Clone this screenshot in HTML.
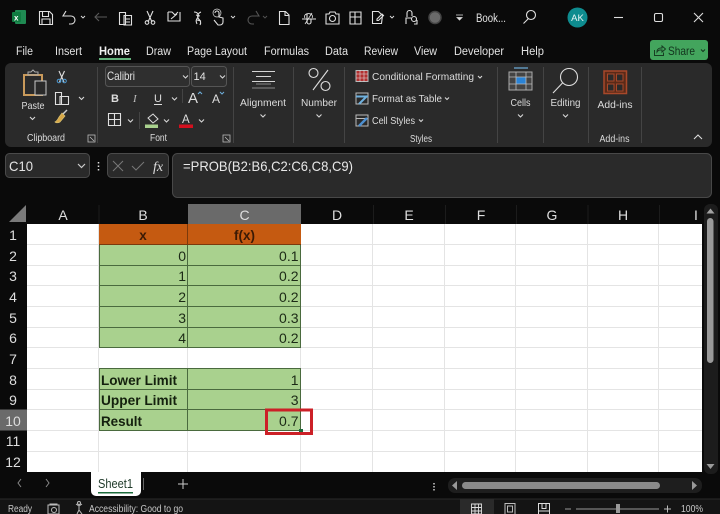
<!DOCTYPE html>
<html><head><meta charset="utf-8"><style>
html,body{margin:0;padding:0;background:#0a0a0a;width:720px;height:514px;overflow:hidden}
svg{display:block}
text{font-family:"Liberation Sans",sans-serif}
.t{font-size:11.500px;fill:#e2e2e2}
.s{font-size:10.500px;fill:#dcdcdc}
.h{font-size:14px;fill:#dedede;text-anchor:middle}
.c{font-size:14px;fill:#1c2a16;text-anchor:end}
.b{font-size:14px;font-weight:bold;fill:#14200e}
.i{fill:none;stroke:#e0e0e0;stroke-width:1.1}
.d{fill:none;stroke:#d8d8d8;stroke-width:1.1}
</style></head><body>
<svg width="720" height="514" viewBox="0 0 720 514" xmlns="http://www.w3.org/2000/svg">
<rect width="720" height="514" fill="#0a0a0a"/>

<!-- Title bar -->
<rect x="15" y="10" width="11" height="14" rx="1" fill="#1f8a52"/>
<rect x="12" y="12" width="9" height="10" rx="1" fill="#107c41"/>
<text x="14" y="20.500" style="font-size:8px;font-weight:bold;fill:#fff">x</text>
<g class="i">
<path d="M39.500 11.500h10l3 3v10h-13z M42.500 11.500v5h6v-5 M42 24v-5h8v5"/>
<path d="M66 11l-3 5h6 M64 16h7a4 4 0 0 1 0 8h-2"/>
<path d="M81 16l2 2 2-2" stroke-width=".9"/>
<path d="M95 17h12 M99 13l-4 4 4 4" stroke="#5a5a5a"/>
<path d="M119.500 12.500h6v12h-6z M124 15.500h7.500v9.500h-7.500z M126 19h4M126 22h4"/>
<path d="M147 11l5 11 M153 11l-5 11"/><circle cx="147" cy="22.500" r="1.800"/><circle cx="153" cy="22.500" r="1.800"/>
<path d="M168 12v9h12v-9 M168 12h4l3 3 3-3 M171 19l6-5"/>
<path d="M194 12c4 0 5 3 4 5s-3 3-1 7 M201 12c-3 1-4 4-3 6s4 3 2 7 M196 15l4 1 M197 20l4 1"/>
<path d="M215 13a2 2 0 0 1 4 0v4l4 1v4a3 3 0 0 1-3 3h-2l-4-5"/><circle cx="217" cy="13" r="4" stroke-width=".7"/>
<path d="M231 16l2 2 2-2" stroke-width=".9"/>
<path d="M256 11l3 5h-6 M258 16h-6a4 4 0 0 0 0 8h2" stroke="#555"/>
<path d="M263 16l2 2 2-2" stroke="#555" stroke-width=".9"/>
<path d="M279.500 11.500h6l3.500 3.500v9.500h-9.500z M285 11.500v4h4"/>
<path d="M302 19h14 M307 14v8a2 2 0 0 0 4 0v-3"/><path d="M305 18a4 3 0 1 1 7 0" stroke-width=".8"/><path d="M312 13l-7 11" stroke-width=".8"/>
<path d="M326 14h3l1-2h5l1 2h3v10h-13z"/><circle cx="332.500" cy="18.500" r="3"/>
<path d="M350 12h11v12h-11z M355 12v12 M350 17h11"/>
<path d="M372.500 11.500h6l4 4-1 8h-9z M377 19l5-5 1.500 1.500-5 5h-1.500z"/>
<path d="M390 16l2 2 2-2" stroke-width=".9"/>
<path d="M407 17v-4a2.500 2.500 0 0 1 5 0v3 M406 24v-6h5 M414 24h3v-4"/><circle cx="414" cy="19" r="2.500"/>
</g>
<circle cx="435" cy="17.500" r="6" fill="#6a6a6a" stroke="#444" stroke-width="1.500"/>
<path d="M456 15h7 M457 17.500l2.500 2.500 2.500-2.500z" stroke="#ddd" fill="#ddd" stroke-width=".8"/>
<text x="476" y="22" class="t" textLength="30" lengthAdjust="spacingAndGlyphs">Book...</text>
<circle cx="531" cy="15" r="4.500" class="i" stroke-width="1.200"/><path d="M528 19l-4.500 4.500" class="i" stroke-width="1.200"/>
<circle cx="577.500" cy="17.500" r="10" fill="#0e8c8f"/>
<text x="577.500" y="21" style="font-size:9.500px;fill:#e8f5f5;text-anchor:middle">AK</text>
<path d="M614 17.500h9" stroke="#ddd" stroke-width="1.100"/>
<rect x="654.500" y="13.500" width="8" height="8" rx="1.500" fill="none" stroke="#ddd" stroke-width="1.100"/>
<path d="M694 13l9 9 M703 13l-9 9" stroke="#ddd" stroke-width="1.100"/>

<!-- Tabs -->
<g class="t">
<text x="16" y="55" textLength="17" lengthAdjust="spacingAndGlyphs">File</text>
<text x="55" y="55" textLength="27" lengthAdjust="spacingAndGlyphs">Insert</text>
<text x="99" y="55" textLength="31" lengthAdjust="spacingAndGlyphs" style="font-weight:bold;fill:#f0f0f0">Home</text>
<text x="146" y="55" textLength="25" lengthAdjust="spacingAndGlyphs">Draw</text>
<text x="187" y="55" textLength="60" lengthAdjust="spacingAndGlyphs">Page Layout</text>
<text x="264" y="55" textLength="45" lengthAdjust="spacingAndGlyphs">Formulas</text>
<text x="325" y="55" textLength="23" lengthAdjust="spacingAndGlyphs">Data</text>
<text x="364" y="55" textLength="34" lengthAdjust="spacingAndGlyphs">Review</text>
<text x="414" y="55" textLength="23" lengthAdjust="spacingAndGlyphs">View</text>
<text x="454" y="55" textLength="50" lengthAdjust="spacingAndGlyphs">Developer</text>
<text x="521" y="55" textLength="23" lengthAdjust="spacingAndGlyphs">Help</text>
</g>
<rect x="99" y="58" width="32" height="2" fill="#63b27c"/>
<rect x="650" y="40" width="58" height="20" rx="3" fill="#43a55d"/>
<path d="M654.500 50v5.500h9v-3 M657 51a4 4 0 0 1 4-3h1v-2l3.500 3-3.500 3v-2h-1a4 4 0 0 0-4 2z" fill="none" stroke="#173d22"/>
<text x="668" y="55" textLength="27" lengthAdjust="spacingAndGlyphs" style="font-size:12px;fill:#12321c">Share</text>
<path d="M701 49.500l2 2 2-2" fill="none" stroke="#12321c"/>

<!-- Ribbon -->
<rect x="5" y="63" width="707" height="84" rx="6" fill="#2a2a2a"/>
<g stroke="#444" stroke-width="1">
<path d="M97.500 67v76 M233.500 67v76 M293.500 67v76 M344.500 67v76 M497.500 67v76 M543.500 67v76 M588.500 67v76 M641.500 67v76"/>
</g>
<!-- Clipboard -->
<path d="M24 75h18v20h-18z" fill="none" stroke="#c99a5b" stroke-width="2"/>
<path d="M28 75v-3h3l2-2 2 2h3v3z" fill="none" stroke="#aaa"/>
<rect x="35" y="81" width="11" height="14" fill="#2a2a2a" stroke="#c8c8c8"/>
<text x="33" y="109" class="s" text-anchor="middle" textLength="23" lengthAdjust="spacingAndGlyphs">Paste</text>
<path d="M30 117l2.500 2.500 2.500-2.500" class="d"/>
<path d="M59 71l5 11 M64.500 71l-5 11" class="i" stroke="#ccc"/>
<circle cx="59" cy="81" r="1.800" fill="none" stroke="#4d9bd5"/><circle cx="64.500" cy="81" r="1.800" fill="none" stroke="#4d9bd5"/>
<path d="M55.500 92.500h6v12h-6z M60 96.500h8.500v8h-8.500z" class="i"/>
<path d="M79 97l2.500 2.500 2.500-2.500" class="d"/>
<path d="M62 113l3 3-5 6c-2 1-4 1-5 0 2-1 3-3 4-5z" fill="#d8a848" stroke="#d8c070" stroke-width=".7"/>
<path d="M63 114l4-4" stroke="#ccc" stroke-width="1.500"/>
<text x="27" y="141" class="s" textLength="38" lengthAdjust="spacingAndGlyphs">Clipboard</text>
<rect x="88" y="135" width="7" height="7" fill="none" stroke="#bbb" stroke-width=".8"/><path d="M90 137l4 4" stroke="#bbb" stroke-width=".8"/>

<!-- Font -->
<rect x="105.500" y="66.500" width="84" height="20" rx="3" fill="#2f2f2f" stroke="#555"/>
<text x="107" y="80" textLength="28" lengthAdjust="spacingAndGlyphs" style="font-size:12px;fill:#e2e2e2">Calibri</text>
<path d="M183 75.500l2.500 2.500 2.500-2.500" class="d"/>
<rect x="191.500" y="66.500" width="35" height="20" rx="3" fill="#2f2f2f" stroke="#555"/>
<text x="193.500" y="80" style="font-size:11px;fill:#e2e2e2">14</text>
<path d="M220 75.500l2.500 2.500 2.500-2.500" class="d"/>
<text x="111" y="102" style="font-size:11px;font-weight:bold;fill:#ddd">B</text>
<text x="133" y="102" style="font-size:11px;font-style:italic;font-family:'Liberation Serif',serif;fill:#bbb">I</text>
<text x="154" y="102" style="font-size:11px;fill:#ddd">U</text><path d="M154 104.500h8" stroke="#ddd"/>
<path d="M172 97.500l2.500 2.500 2.500-2.500" class="d"/>
<path d="M182.500 89v14" stroke="#444"/>
<text x="188" y="103" style="font-size:15px;fill:#ddd">A</text><path d="M198 94l2-2 2 2" stroke="#6fb0dd" fill="none"/>
<text x="212" y="103" style="font-size:12px;fill:#ddd">A</text><path d="M220 92l2 2 2-2" stroke="#6fb0dd" fill="none"/>
<path d="M108.500 113.500h12v12h-12z M114.500 113.500v12 M108.500 119.500h12" class="i" stroke="#e6e6e6"/>
<path d="M128 119.500l2.500 2.500 2.500-2.500" class="d"/>
<path d="M139.500 112v17" stroke="#444"/>
<path d="M148 118l5-4 5 5-5 4z" fill="none" stroke="#ddd"/>
<rect x="145" y="124.500" width="13" height="3.500" fill="#a9d18e"/>
<path d="M164 119.500l2.500 2.500 2.500-2.500" class="d"/>
<text x="182" y="123" style="font-size:11.500px;fill:#ddd">A</text>
<rect x="179" y="124.500" width="14" height="3.500" fill="#d3101e"/>
<path d="M199 119.500l2.500 2.500 2.500-2.500" class="d"/>
<text x="150" y="141" class="s" textLength="17" lengthAdjust="spacingAndGlyphs">Font</text>
<rect x="223" y="135" width="7" height="7" fill="none" stroke="#bbb" stroke-width=".8"/><path d="M225 137l4 4" stroke="#bbb" stroke-width=".8"/>

<!-- Alignment -->
<path d="M252 71.500h23 M256 76.500h15 M252 81.500h23" stroke="#d5d5d5"/>
<path d="M256 84h15 M252 88h23" stroke="#888" stroke-width="1"/>
<text x="240" y="106" class="s" textLength="46" lengthAdjust="spacingAndGlyphs">Alignment</text>
<path d="M260.500 114.500l2.500 2.500 2.500-2.500" class="d"/>
<!-- Number -->
<circle cx="313.500" cy="73" r="4.500" fill="none" stroke="#ddd" stroke-width="1.100"/>
<circle cx="325.500" cy="86" r="4.500" fill="none" stroke="#ddd" stroke-width="1.100"/>
<path d="M328 70l-15 20" stroke="#ddd" stroke-width="1.100"/>
<text x="301" y="106" class="s" textLength="36" lengthAdjust="spacingAndGlyphs">Number</text>
<path d="M316.500 114.500l2.500 2.500 2.500-2.500" class="d"/>
<!-- Styles -->
<rect x="356" y="70.500" width="12" height="11" fill="#b23030" stroke="#bbb"/><path d="M356 74h12 M356 78h12 M360 70v12 M364 70v12" stroke="#ddd" stroke-width=".6"/>
<rect x="356" y="93" width="12" height="11" fill="none" stroke="#bbb"/><path d="M356 96.500h12" stroke="#6fb0dd" stroke-width="2"/><path d="M359 104l8-8" stroke="#6fb0dd" stroke-width="2"/>
<rect x="356" y="115" width="12" height="11" fill="none" stroke="#bbb"/><path d="M356 118.500h12" stroke="#bbb"/><path d="M359 126l8-8" stroke="#4d8fd0" stroke-width="2.500"/>
<text x="372" y="80" class="s" textLength="102" lengthAdjust="spacingAndGlyphs">Conditional Formatting</text>
<path d="M478 76l2 2 2-2" class="d"/>
<text x="372" y="102" class="s" textLength="70" lengthAdjust="spacingAndGlyphs">Format as Table</text>
<path d="M445 97.500l2 2 2-2" class="d"/>
<text x="372" y="124" class="s" textLength="43" lengthAdjust="spacingAndGlyphs">Cell Styles</text>
<path d="M419 119.500l2 2 2-2" class="d"/>
<text x="410" y="142" class="s" textLength="22" lengthAdjust="spacingAndGlyphs">Styles</text>

<!-- Cells -->
<rect x="509" y="72" width="23" height="18" fill="#444" stroke="#aaa"/>
<rect x="516" y="77" width="10" height="7" fill="#2a83d6"/>
<path d="M509 77h23 M509 84h23 M516 72v18 M526 72v18" stroke="#bbb" stroke-width=".8"/>
<path d="M514 68h14" stroke="#6fb0dd" stroke-width="1.200"/>
<text x="510.500" y="106" class="s" textLength="20" lengthAdjust="spacingAndGlyphs">Cells</text>
<path d="M518 114.500l2.500 2.500 2.500-2.500" class="d"/>
<!-- Editing -->
<circle cx="569" cy="77" r="8.500" fill="none" stroke="#ddd" stroke-width="1.100"/>
<path d="M562.500 83l-9.500 10" stroke="#ddd" stroke-width="1.100"/>
<text x="550.500" y="106" class="s" textLength="30" lengthAdjust="spacingAndGlyphs">Editing</text>
<path d="M563 114.500l2.500 2.500 2.500-2.500" class="d"/>
<!-- Add-ins -->
<rect x="604" y="71" width="22.500" height="22.500" fill="#5a2a18" stroke="#a8482a" stroke-width="1.500"/>
<rect x="607.500" y="74" width="6.500" height="7" fill="#2a2a2a" stroke="#a8482a"/>
<rect x="616.500" y="74" width="6.500" height="7" fill="#2a2a2a" stroke="#a8482a"/>
<rect x="607.500" y="84" width="6.500" height="7" fill="#2a2a2a" stroke="#a8482a"/>
<rect x="616.500" y="84" width="6.500" height="7" fill="#2a2a2a" stroke="#a8482a"/>
<text x="597.500" y="108" class="s" textLength="35" lengthAdjust="spacingAndGlyphs">Add-ins</text>
<text x="599.500" y="142" class="s" textLength="30" lengthAdjust="spacingAndGlyphs">Add-ins</text>
<path d="M694 139l4-4 4 4" fill="none" stroke="#ddd" stroke-width="1.100"/>

<!-- Formula bar -->
<rect x="5.500" y="153.500" width="84" height="24" rx="4" fill="#2a2a2a" stroke="#4a4a4a"/>
<text x="9" y="171" textLength="24" lengthAdjust="spacingAndGlyphs" style="font-size:14px;fill:#e4e4e4">C10</text>
<path d="M78 164l3.500 3.500 3.500-3.500" fill="none" stroke="#ccc" stroke-width="1.200"/>
<path d="M98.500 162v1.500 M98.500 165.500v1.500 M98.500 169v1.500" stroke="#ddd" stroke-width="1.500"/>
<rect x="107.500" y="153.500" width="61" height="24" rx="4" fill="#2a2a2a" stroke="#4a4a4a"/>
<path d="M113 161l10 10 M123 161l-10 10" stroke="#777" fill="none"/>
<path d="M132 166l4 4 8-8" stroke="#777" fill="none"/>
<text x="153" y="171" style="font-size:14px;font-style:italic;font-family:'Liberation Serif',serif;fill:#ddd">fx</text>
<rect x="172.500" y="153.500" width="539" height="44" rx="5" fill="#2a2a2a" stroke="#484848"/>
<text x="183" y="171" textLength="170" lengthAdjust="spacingAndGlyphs" style="font-size:14px;fill:#e8e8e8">=PROB(B2:B6,C2:C6,C8,C9)</text>

<!-- Sheet -->
<rect x="27" y="224" width="675" height="248" fill="#fff"/>
<rect x="188" y="204" width="113" height="20" fill="#6a6a6a"/>
<path d="M26 205v17h-17z" fill="#7a7a7a"/>
<rect x="0" y="409.500" width="27" height="21" fill="#6a6a6a"/>
<g stroke="#1c1c1c"><path d="M99 205v19 M373.500 205v19 M445.500 205v19 M516.500 205v19 M588 205v19 M659.500 205v19"/></g>
<g stroke="#e4e4e4" stroke-width="1">
<path d="M27 244.500h675 M27 265.500h675 M27 285.500h675 M27 306.500h675 M27 327.500h675 M27 347.500h675 M27 368.500h675 M27 389.500h675 M27 409.500h675 M27 430.500h675 M27 451.500h675"/>
<path d="M98.500 224v248 M187.500 224v248 M300.500 224v248 M372.500 224v248 M444.500 224v248 M515.500 224v248 M587.500 224v248 M658.500 224v248"/>
</g>
<rect x="99" y="224" width="202" height="21" fill="#c55a11"/>
<rect x="99" y="245" width="202" height="103" fill="#a9d18e"/>
<rect x="99" y="368.500" width="202" height="62" fill="#a9d18e"/>
<g stroke="#4a6a3e" stroke-width="1" fill="none">
<path d="M99 265.500h202 M99 285.500h202 M99 306.500h202 M99 327.500h202"/>
<path d="M99.500 245v103 M187.500 245v103 M300.500 245v103 M99 347.500h202 M99 244.500h202"/>
<path d="M99.500 368v63 M187.500 368v63 M300.500 368v63 M99 368.500h202 M99 389.500h202 M99 409.500h202 M99 430.500h202"/>
</g>
<path d="M187.500 224v21 M99 244.500h202" stroke="#7a3a0c"/>

<g class="h">
<text x="63" y="220">A</text><text x="143" y="220">B</text><text x="244.500" y="220">C</text><text x="337" y="220">D</text><text x="409" y="220">E</text><text x="481" y="220">F</text><text x="552" y="220">G</text><text x="623" y="220">H</text>
<text x="13" y="240">1</text><text x="13" y="261">2</text><text x="13" y="281">3</text><text x="13" y="302">4</text><text x="13" y="323">5</text><text x="13" y="343">6</text><text x="13" y="364">7</text><text x="13" y="385">8</text><text x="13" y="405">9</text><text x="13" y="426">10</text><text x="13" y="446">11</text><text x="13" y="467">12</text>
</g>
<text x="694" y="220" style="font-size:14px;fill:#dedede">I</text>
<text x="143" y="240" style="font-size:13.500px;font-weight:bold;fill:#3a1a05;text-anchor:middle">x</text>
<text x="244.500" y="240" style="font-size:13.500px;font-weight:bold;fill:#3a1a05;text-anchor:middle">f(x)</text>
<g class="c">
<text x="186" y="261">0</text><text x="186" y="281">1</text><text x="186" y="302">2</text><text x="186" y="323">3</text><text x="186" y="343">4</text>
<text x="298.500" y="261">0.1</text><text x="298.500" y="281">0.2</text><text x="298.500" y="302">0.2</text><text x="298.500" y="323">0.3</text><text x="298.500" y="343">0.2</text>
<text x="298.500" y="385">1</text><text x="298.500" y="405">3</text><text x="298.500" y="426">0.7</text>
</g>
<g class="b">
<text x="101" y="385" textLength="76" lengthAdjust="spacingAndGlyphs">Lower Limit</text><text x="101" y="405" textLength="76" lengthAdjust="spacingAndGlyphs">Upper Limit</text><text x="101" y="426" textLength="41" lengthAdjust="spacingAndGlyphs">Result</text>
</g>
<rect x="299" y="429" width="4" height="4" fill="#1d6b3c"/>
<rect x="266.500" y="410" width="45" height="23.500" fill="none" stroke="#cc2027" stroke-width="3"/>

<!-- Vertical scrollbar -->
<rect x="704" y="204" width="14" height="270" rx="6" fill="#1c1c1c"/>
<path d="M706.500 213.500h8l-4-5z" fill="#a2a2a2"/>
<rect x="707" y="218" width="6.500" height="145" rx="3.250" fill="#9a9a9a"/>
<path d="M706.500 464h8l-4 5z" fill="#9a9a9a"/>

<!-- Bottom tabs -->
<path d="M21 479l-3 4 3 4 M46 479l3 4-3 4" fill="none" stroke="#888"/>
<path d="M91 472h50v19a5 5 0 0 1-5 5h-40a5 5 0 0 1-5-5z" fill="#fff"/>
<text x="98" y="488" textLength="35" lengthAdjust="spacingAndGlyphs" style="font-size:12.500px;fill:#1f3a2a">Sheet1</text>
<rect x="98" y="492" width="35" height="1.500" fill="#1d6b3c"/>
<path d="M143.500 478v12" stroke="#666"/>
<path d="M183 479v10 M178 484h10" stroke="#ccc"/>
<rect x="448" y="478" width="254" height="15" rx="7" fill="#1e1e1e"/>
<rect x="462" y="482" width="198" height="7" rx="3.500" fill="#8a8a8a"/>
<path d="M457 481v9l-5-4.500z M692 481v9l5 -4.500z" fill="#9a9a9a"/>
<path d="M434 483v1.500 M434 486v1.500 M434 489v1.500" stroke="#ccc" stroke-width="1.500"/>

<!-- Status bar -->
<rect x="0" y="499" width="720" height="15" fill="#141414"/>
<rect x="0" y="498.500" width="720" height="1" fill="#2a2a2a"/>
<rect x="460" y="499" width="34" height="15" fill="#2a2a2a"/>
<text x="8" y="512" textLength="24" lengthAdjust="spacingAndGlyphs" style="font-size:10px;fill:#c8c8c8">Ready</text>
<path d="M48 505h11v9h-11z M50 505v-1h7v1" fill="none" stroke="#bbb"/><circle cx="54" cy="510" r="2.500" fill="none" stroke="#bbb"/>
<path d="M76 504l3 2 3-2 M79 506v4l-2 4 M79 510l3 4" fill="none" stroke="#bbb"/><circle cx="79" cy="503" r="1.500" fill="none" stroke="#bbb"/>
<text x="89" y="512" textLength="94" lengthAdjust="spacingAndGlyphs" style="font-size:10px;fill:#c8c8c8">Accessibility: Good to go</text>
<path d="M471.500 504h10v10h-10z M471.500 507.500h10 M471.500 511h10 M475 504v10 M478.500 504v10" fill="none" stroke="#ddd" stroke-width=".9"/>
<path d="M505 503.500h10v11h-10z M507.500 506h5v6h-5z" fill="none" stroke="#bbb"/>
<path d="M538.500 503.500h11v11h-11z M542 503.500v5h4v-5 M538.500 511h11" fill="none" stroke="#ddd"/>
<path d="M565 509h6 M576 509h83" stroke="#999"/>
<rect x="616" y="504" width="4" height="9" fill="#999"/>
<path d="M664 509h7 M667.500 505.500v7" stroke="#bbb"/>
<text x="681" y="512" textLength="22" lengthAdjust="spacingAndGlyphs" style="font-size:10px;fill:#c8c8c8">100%</text>
</svg>
</body></html>
